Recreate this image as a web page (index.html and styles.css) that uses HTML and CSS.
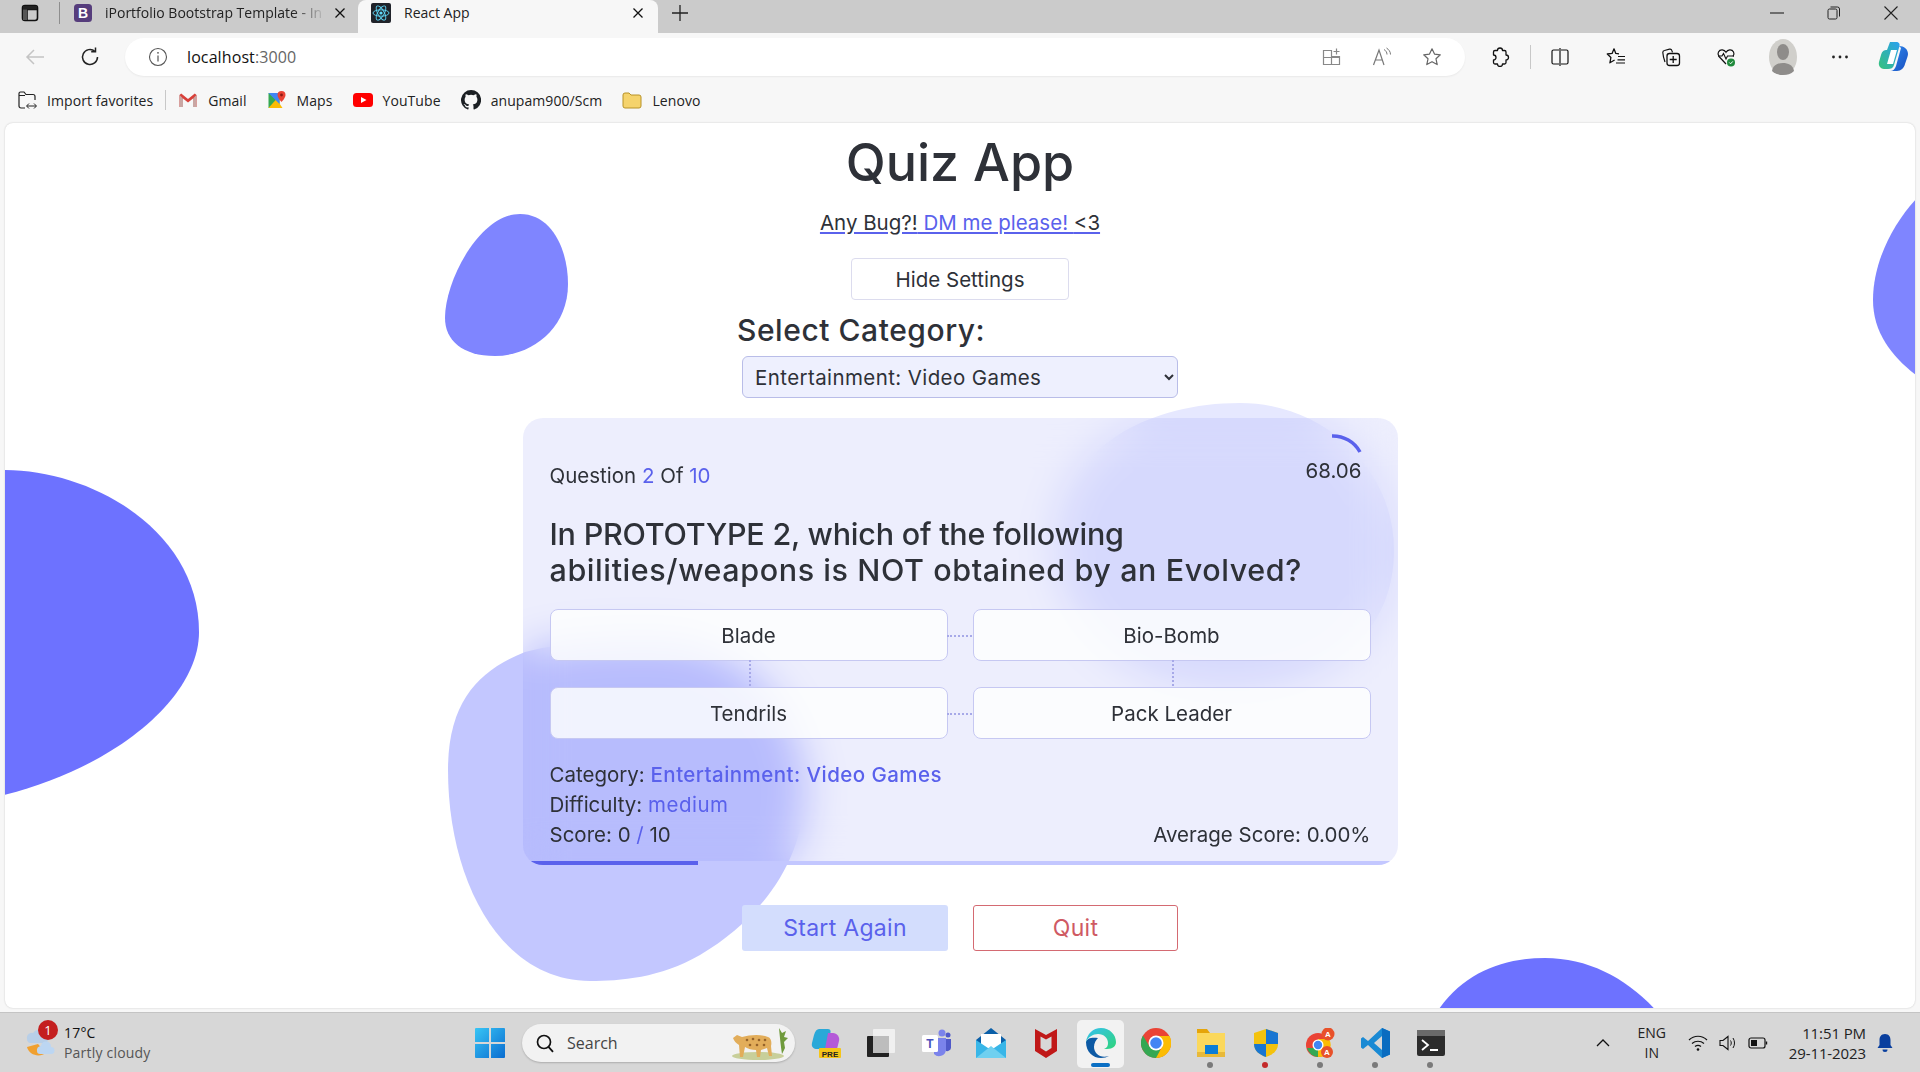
FILE: index.html
```html
<!DOCTYPE html>
<html lang="en">
<head>
<meta charset="utf-8">
<title>React App</title>
<link rel="stylesheet" href="styles.css">
</head>
<body>
<header class="tabstrip">
  <svg class="ic sidebar-ic" viewBox="0 0 20 20"><rect x="2.5" y="2.5" width="15" height="15" rx="2.5" fill="none" stroke="#111" stroke-width="1.6"/><path d="M2.5 6.5h15M7 6.5v11" stroke="#111" stroke-width="1.6"/><rect x="3" y="3" width="14" height="3.5" fill="#222"/><rect x="3" y="6.5" width="4" height="10.5" fill="#555"/></svg>
  <span class="tab-sep"></span>
  <div class="tab tab-idle">
    <svg class="ic fav" viewBox="0 0 20 20"><rect x="1" y="1" width="18" height="18" rx="3.5" fill="#563d7c"/><text x="10" y="15" text-anchor="middle" class="fav-b">B</text></svg>
    <span class="tab-title fade">iPortfolio Bootstrap Template - In</span>
    <svg class="ic tab-x" viewBox="0 0 12 12"><path d="M1.5 1.5l9 9M10.500 1.500l-9 9" stroke="#111" stroke-width="1.3"/></svg>
  </div>
  <div class="tab tab-active">
    <svg class="ic fav" viewBox="0 0 20 20"><rect width="20" height="20" rx="2" fill="#20232a"/><g fill="none" stroke="#61dafb" stroke-width=".9"><ellipse cx="10" cy="10" rx="8" ry="3.2"/><ellipse cx="10" cy="10" rx="8" ry="3.2" transform="rotate(60 10 10)"/><ellipse cx="10" cy="10" rx="8" ry="3.2" transform="rotate(120 10 10)"/></g><circle cx="10" cy="10" r="1.600" fill="#61dafb"/></svg>
    <span class="tab-title">React App</span>
    <svg class="ic tab-x" viewBox="0 0 12 12"><path d="M1.5 1.5l9 9M10.500 1.500l-9 9" stroke="#111" stroke-width="1.3"/></svg>
  </div>
  <svg class="ic new-tab" viewBox="0 0 18 18"><path d="M9 1v16M1 9h16" stroke="#222" stroke-width="1.3"/></svg>
  <div class="win-controls">
    <svg class="ic win" viewBox="0 0 14 14"><path d="M0 7h14" stroke="#222" stroke-width="1.100"/></svg>
    <svg class="ic win" viewBox="0 0 14 14"><rect x="1" y="3" width="9" height="10" rx="1.500" fill="none" stroke="#222"/><path d="M3.500 1h7a2 2 0 0 1 2 2v7.500" fill="none" stroke="#222"/></svg>
    <svg class="ic win" viewBox="0 0 14 14"><path d="M.5.500l13 13M13.500.500l-13 13" stroke="#222" stroke-width="1.100"/></svg>
  </div>
</header>

<nav class="toolbar">
  <svg class="ic tool back" viewBox="0 0 22 22"><path d="M20 11H3M10 4l-7 7 7 7" fill="none" stroke="#c4c4c4" stroke-width="1.500"/></svg>
  <svg class="ic tool reload" viewBox="0 0 22 22"><path d="M18.500 11a7.500 7.500 0 1 1-2.600-5.700" fill="none" stroke="#222" stroke-width="1.500"/><path d="M16.500 1.500v4.300h-4.300" fill="none" stroke="#222" stroke-width="1.500"/></svg>
  <div class="omnibox">
    <svg class="ic info-ic" viewBox="0 0 20 20"><circle cx="10" cy="10" r="8.500" fill="none" stroke="#555" stroke-width="1.100"/><path d="M10 8.500v6" stroke="#555" stroke-width="1.200"/><circle cx="10" cy="5.800" r=".9" fill="#555"/></svg>
    <span class="url">localhost<span class="url-port">:3000</span></span>
    <div class="omni-actions">
      <svg class="ic tool-s" viewBox="0 0 20 20"><path d="M1.500 3.500h8v14h-8zM9.500 9.500h8v8h-8zM1.500 10.500h16" fill="none" stroke="#888" stroke-width="1.200"/><path d="M14.500 1.500v6M11.500 4.500h6" stroke="#888" stroke-width="1.200"/></svg>
      <svg class="ic tool-s" viewBox="0 0 20 20"><path d="M1.500 18L7 3l5 15M3.300 13h7.400" fill="none" stroke="#777" stroke-width="1.200"/><path d="M12 2.500c2 1.200 3 3 3 5M14.500 1c2.200 1.500 4 3.500 4 6.500" fill="none" stroke="#777"/></svg>
      <svg class="ic tool-s" viewBox="0 0 20 20"><path d="M10 1.800l2.500 5.300 5.800.7-4.300 4 1.200 5.800-5.200-2.900-5.200 2.900 1.200-5.800-4.300-4 5.800-.7z" fill="none" stroke="#666" stroke-width="1.200" stroke-linejoin="round"/></svg>
    </div>
  </div>
  <div class="tool-group">
    <svg class="ic tool-s" viewBox="0 0 20 20"><path d="M7.500 3.500a2.500 2.500 0 0 1 5 0h2a1.500 1.500 0 0 1 1.500 1.500v3a2.500 2.500 0 0 1 0 5v2.500a1.500 1.500 0 0 1-1.500 1.500h-2a2.500 2.500 0 0 1-5 0H5a1.500 1.500 0 0 1-1.500-1.500V13a2.500 2.500 0 0 0 0-5V5A1.500 1.500 0 0 1 5 3.500z" fill="none" stroke="#111" stroke-width="1.300" stroke-linejoin="round"/></svg>
    <span class="tool-sep"></span>
    <svg class="ic tool-s split" viewBox="0 0 20 20"><path d="M9 3H3.500A1.500 1.500 0 0 0 2 4.500v11A1.500 1.500 0 0 0 3.500 17H9M11 3h5.500A1.500 1.500 0 0 1 18 4.500v11a1.500 1.500 0 0 1-1.500 1.500H11M10 1v18" fill="none" stroke="#111" stroke-width="1.200"/></svg>
    <svg class="ic tool-s" viewBox="0 0 20 20"><path d="M13 6.800l-3.200-.4L8 1.800 6.100 6.400 1.300 7l3.600 3.500-1 5.300 4.700-2.800" fill="none" stroke="#111" stroke-width="1.300" stroke-linejoin="round"/><path d="M12 9.500h7M11.500 12.800h7.500M10 16h9" stroke="#111" stroke-width="1.200"/></svg>
    <svg class="ic tool-s" viewBox="0 0 20 20"><path d="M4 15C2.500 11 2 8 1.800 5.500c0-1 .7-1.800 1.700-2l5-1.300c1-.2 2 .2 2.300 1.200l.7 2" fill="none" stroke="#111" stroke-width="1.200"/><rect x="6" y="6.500" width="12.500" height="12" rx="2.500" fill="none" stroke="#111" stroke-width="1.300"/><path d="M12.200 9v7M8.700 12.500h7" stroke="#111" stroke-width="1.300"/></svg>
    <svg class="ic tool-s" viewBox="0 0 20 20"><path d="M10 17L3 9.500C.5 6.500 3 2.500 6.300 2.800 8 3 9.200 4 10 5.300 10.800 4 12 3 13.700 2.800 17 2.500 19.500 6.500 17 9.500" fill="none" stroke="#111" stroke-width="1.200"/><path d="M2 9h4l1.500-2.500L10 12l1.500-3H18" fill="none" stroke="#111" stroke-width="1.100"/><circle cx="15" cy="15.500" r="4" fill="#1f8a3b"/><path d="M13.300 15.500l1.300 1.300 2.200-2.400" fill="none" stroke="#fff"/></svg>
    <svg class="ic avatar" viewBox="0 0 28 36"><ellipse cx="14" cy="18" rx="14" ry="18" fill="#d0cfcb"/><ellipse cx="14" cy="13" rx="6" ry="8" fill="#8e8c8a"/><path d="M3 32c1-6 6-8 11-8s10 2 11 8c-3 3-7 4-11 4s-8-1-11-4z" fill="#8e8c8a"/></svg>
    <svg class="ic tool-s dots" viewBox="0 0 20 20"><circle cx="3.500" cy="10" r="1.400" fill="#222"/><circle cx="10" cy="10" r="1.400" fill="#222"/><circle cx="16.500" cy="10" r="1.400" fill="#222"/></svg>
    <svg class="ic copilot" viewBox="0 0 30 32"><defs><linearGradient id="cpa" x1="0" y1="1" x2="1" y2="0"><stop offset="0" stop-color="#35c27b"/><stop offset="1" stop-color="#2aa0f0"/></linearGradient><linearGradient id="cpb" x1="0" y1="0" x2="1" y2="1"><stop offset="0" stop-color="#2f8cf0"/><stop offset="1" stop-color="#1a4fc0"/></linearGradient></defs><path d="M12 1h6c3 0 4 2 3.500 4L16 24c-1 3-3 4-6 4H6c-3 0-6-3-5-7l2-7c1-4 3-5 6-5l3-8z" fill="url(#cpa)"/><path d="M21 5c5 0 9 3 9 8 0 1-.3 2-.6 3l-2.400 7c-1 4-4 7-8 7h-7c3 0 5-2 6-5l5-18z" fill="url(#cpb)"/><path d="M13 9h6l-4 14H9z" fill="#fff"/></svg>
  </div>
</nav>

<nav class="bookmarks">
  <a class="bm bm-import"><svg class="ic bm-ic" viewBox="0 0 20 20"><path d="M8 18H4a2 2 0 0 1-2-2V3.500A1.500 1.500 0 0 1 3.500 2H7l2 2.500h7a2 2 0 0 1 2 2V10M2 5.500h6" fill="none" stroke="#222" stroke-width="1.200"/><path d="M10 16h9M12 13.500L9.500 16l2.500 2.500M17 13.500l2.500 2.500-2.500 2.500" fill="none" stroke="#222"/></svg>Import favorites</a>
  <span class="bm-sep"></span>
  <a class="bm"><svg class="ic bm-ic" viewBox="0 0 20 20"><path d="M1.500 5v12h3.500V8.500L10 12.500l5-4V17h3.500V5l-1.700-1.500L10 9 3.200 3.500z" fill="#d8403a"/><path d="M5 8.500V17H1.500V5z" fill="#c9a6a3"/><path d="M15 8.500V17h3.500V5z" fill="#c9a6a3"/></svg>Gmail</a>
  <a class="bm"><svg class="ic bm-ic" viewBox="0 0 20 20"><path d="M1.500 3h11v15h-11z" fill="#34a853"/><path d="M1.500 18l8-9 6 9z" fill="#fbbc04"/><path d="M1.500 3l11 11V3z" fill="#4285f4"/><path d="M14.500 1a4 4 0 0 0-4 4c0 3 4 7 4 7s4-4 4-7a4 4 0 0 0-4-4z" fill="#ea4335"/><circle cx="14.500" cy="5" r="1.400" fill="#8b1a14"/></svg>Maps</a>
  <a class="bm"><svg class="ic bm-ic" viewBox="0 0 20 20"><rect y="3" width="20" height="14" rx="3.500" fill="#f00"/><path d="M8 7l5.500 3L8 13z" fill="#fff"/></svg>YouTube</a>
  <a class="bm"><svg class="ic bm-ic" viewBox="0 0 16 16"><path fill="#1b1f23" d="M8 0a8 8 0 0 0-2.530 15.590c.4.070.55-.17.550-.38v-1.340c-2.230.48-2.700-1.070-2.700-1.070-.36-.92-.89-1.170-.89-1.170-.73-.5.050-.49.050-.49.800.060 1.230.83 1.230.83.710 1.220 1.870.87 2.330.66.070-.52.280-.87.510-1.070-1.780-.2-3.640-.89-3.640-3.950 0-.87.310-1.590.82-2.150-.080-.2-.36-1.020.080-2.120 0 0 .67-.21 2.200.82a7.600 7.600 0 0 1 4 0c1.530-1.040 2.200-.82 2.200-.82.440 1.100.16 1.920.080 2.120.51.560.82 1.270.82 2.150 0 3.070-1.870 3.750-3.650 3.950.29.250.54.730.54 1.480v2.190c0 .21.150.46.550.38A8 8 0 0 0 8 0z"/></svg>anupam900/Scm</a>
  <a class="bm"><svg class="ic bm-ic" viewBox="0 0 20 20"><path d="M1 5a2 2 0 0 1 2-2h4l2 2h8a2 2 0 0 1 2 2v9a2 2 0 0 1-2 2H3a2 2 0 0 1-2-2z" fill="#f5d36c" stroke="#b89227"/></svg>Lenovo</a>
</nav>

<div class="viewport">
  <main class="page">
    <svg class="blobs" viewBox="5 123 1910 885" aria-hidden="true">
      <path fill="#7f85ff" d="M520 214C552 214 568 250 568 284C568 330 530 356 495 356C462 356 445 340 445 318C445 280 480 214 520 214Z"/>
      <path fill="#6d72ff" d="M0 470C90 468 199 530 199 632C199 700 110 770 0 796Z"/>
      <path fill="#7f85ff" d="M1920 195C1895 220 1873 260 1873 300C1873 335 1895 360 1920 378Z"/>
      <path fill="#6d72ff" d="M1435 1015C1460 975 1500 958 1545 958C1590 958 1630 980 1660 1015Z"/>
      <path fill="#c3c7ff" d="M660 640C740 640 805 710 805 790C805 860 760 920 700 955C660 978 620 981 590 981C500 981 448 880 448 770C448 700 480 670 525 652C570 640 620 640 660 640Z"/>
      <path fill="#e6e8ff" d="M1240 403C1325 403 1394 470 1394 550C1394 640 1320 690 1230 690C1135 690 1056 630 1056 540C1056 460 1135 403 1240 403Z"/>
    </svg>
    <h1 class="title">Quiz App</h1>
    <a class="bug-link"><span class="ink">Any Bug?!</span> DM me please! <span class="ink">&lt;3</span></a>
    <button class="settings-btn">Hide Settings</button>
    <section class="settings">
      <label class="cat-label" for="cat">Select Category:</label>
      <select class="cat-select" id="cat"><option>Entertainment: Video Games</option></select>
    </section>
    <section class="card">
      <div class="card-body">
        <div class="card-head">
          <p class="q-count">Question <b class="hl">2</b> Of <b class="hl">10</b></p>
          <div class="timer">
            <svg class="timer-arc" viewBox="0 0 36 20"><path d="M5 2A31 31 0 0 1 33 18" fill="none" stroke="#5a61ec" stroke-width="3.500"/></svg>
            <span>68.06</span>
          </div>
        </div>
        <h2 class="question"><span class="q-line-a">In PROTOTYPE 2, which of the following</span><span class="q-line-b">abilities/weapons is NOT obtained by an Evolved?</span></h2>
        <div class="options">
          <button class="option link-h link-v">Blade</button>
          <button class="option link-v">Bio-Bomb</button>
          <button class="option link-h">Tendrils</button>
          <button class="option">Pack Leader</button>
        </div>
        <div class="quiz-info">
          <p>Category: <b class="hl strong">Entertainment: Video Games</b></p>
          <p>Difficulty: <b class="hl wide">medium</b></p>
          <div class="score-row"><p>Score: 0 <b class="hl">/</b> 10</p><p>Average Score: 0.00%</p></div>
        </div>
      </div>
      <div class="progress"><div class="progress-fill"></div></div>
    </section>
    <div class="actions">
      <button class="btn btn-start">Start Again</button>
      <button class="btn btn-quit">Quit</button>
    </div>
  </main>
</div>

<footer class="taskbar">
  <div class="weather">
    <svg class="ic weather-ic" viewBox="0 0 36 36"><path d="M4 14a5 5 0 0 1 6-6 6 6 0 0 1 11 2 4 4 0 0 1 0 8H7a4 4 0 0 1-3-4z" fill="#b8cfe8"/><path d="M4 22c2 8 12 11 19 6l-8-9z" fill="#f0a030"/><path d="M14 26a4 4 0 0 1 4-5 5 5 0 0 1 10 1 3.500 3.500 0 0 1 0 7H17a3 3 0 0 1-3-3z" fill="#bcd6f2"/></svg>
    <span class="badge">1</span>
    <div class="weather-text"><span class="temp">17°C</span><span>Partly cloudy</span></div>
  </div>
  <svg class="ic winlogo" viewBox="0 0 30 30"><defs><linearGradient id="wl" x1="0" y1="0" x2="1" y2="1"><stop offset="0" stop-color="#38c5f5"/><stop offset="1" stop-color="#0a6cd0"/></linearGradient></defs><path d="M0 1a1 1 0 0 1 1-1h13v14H0zM16 0h13a1 1 0 0 1 1 1v13H16zM0 16h14v14H1a1 1 0 0 1-1-1zM16 16h14v13a1 1 0 0 1-1 1H16z" fill="url(#wl)"/></svg>
  <div class="search">
    <svg class="ic search-ic" viewBox="0 0 20 20"><circle cx="9" cy="9" r="6.500" fill="none" stroke="#111" stroke-width="1.700"/><path d="M13.500 13.800l4.500 5" stroke="#111" stroke-width="1.800"/></svg>
    <span>Search</span>
    <svg class="ic cheetah" viewBox="0 0 62 36"><ellipse cx="30" cy="31" rx="26" ry="4" fill="#c8cf9a"/><path d="M51 3l3 5 4-2-2 6 4 1-4 4 1 6-3 6c-1-6-2-15-3-26z" fill="#6f9a3c"/><path d="M5 13l4-3 5 2c8-2 18-3 26 0 3 1 4 5 3 9l1 10h-3l-2-8-6 2-1 7h-3l-1-7c-4 0-8-1-11-3l-2 10h-3l-1-12c-3-2-5-4-6-7z" fill="#e2ad5a"/><g fill="#96632a"><circle cx="19" cy="15" r="1.300"/><circle cx="25" cy="14" r="1.300"/><circle cx="31" cy="15" r="1.300"/><circle cx="37" cy="15" r="1.300"/><circle cx="22" cy="20" r="1.300"/><circle cx="29" cy="20" r="1.300"/><circle cx="36" cy="20" r="1.300"/></g></svg>
  </div>
  <div class="apps">
    <div class="app"><svg class="ic app-ic" viewBox="0 0 30 30"><path d="M8 1h9c3 0 3 3 2 5l-4 15H6c-3 0-6-2-5-6l2-8c1-4 3-6 5-6z" fill="#2aa8d8"/><path d="M17 5h5c4 0 7 4 6 8l-2 8H14z" fill="#b45ad8"/><rect x="8" y="20" width="22" height="10" rx="1" fill="#f5c518"/><text x="19" y="28.500" text-anchor="middle" class="pre">PRE</text></svg></div>
    <div class="app"><svg class="ic app-ic" viewBox="0 0 30 30"><rect x="7" y="1" width="22" height="24" rx="1" fill="#f0f0f0"/><rect x="1" y="8" width="22" height="21" rx="1" fill="#222"/><rect x="7" y="8" width="16" height="17" fill="#bdbdbd"/></svg></div>
    <div class="app"><svg class="ic app-ic" viewBox="0 0 30 30"><circle cx="21" cy="5" r="3.500" fill="#7b83eb"/><circle cx="27" cy="7" r="2.500" fill="#5059c9"/><path d="M13 10h12v12a7 7 0 0 1-12 4z" fill="#7b83eb"/><path d="M25 11h5v9a4 4 0 0 1-5 3z" fill="#5059c9"/><rect x="1" y="7" width="16" height="17" rx="1.500" fill="#fff"/><text x="9" y="20" text-anchor="middle" class="teams-t">T</text></svg></div>
    <div class="app"><svg class="ic app-ic" viewBox="0 0 30 30"><path d="M15 0L30 12v18H0V12z" fill="#0a5fa8"/><rect x="5" y="6" width="20" height="14" fill="#fff"/><path d="M0 12l15 10 15-10v18H0z" fill="#38b6e8"/><path d="M0 30l15-12 15 12z" fill="#6fd0f0"/></svg></div>
    <div class="app"><svg class="ic app-ic" viewBox="0 0 30 30"><path d="M4 1l11 6 11-6v22l-11 7-11-7z" fill="#c01818"/><path d="M9.500 8.500l5.500 3 5.500-3v11.500l-5.500 3.500-5.500-3.500z" fill="#d8d8d8"/></svg></div>
    <div class="app app-on"><svg class="ic app-ic" viewBox="0 0 30 30"><defs><linearGradient id="ed" x1="0" y1="0" x2="1" y2="1"><stop offset="0" stop-color="#35c1f1"/><stop offset="1" stop-color="#2fd47a"/></linearGradient></defs><path d="M0 14c0 10 7 16 15 16 3 0 6-1 8-2-9 3-15-3-15-9 0-4 2-7 4-9-6-1-11 0-12 4z" fill="#0c59a4"/><path d="M15 0c9 0 15 7 15 14 0 4-3 7-9 7h-3c3-1 4-3 4-6 0-5-4-9-10-9-5 0-10 3-12 8 1-8 7-14 15-14z" fill="url(#ed)"/></svg><span class="app-bar"></span></div>
    <div class="app"><svg class="ic app-ic" viewBox="0 0 30 30"><circle cx="15" cy="15" r="15" fill="#ea4335"/><path d="M15 15L2 22.500A15 15 0 0 0 15 30l7.500-2z" fill="#34a853"/><path d="M15 8h13.500A15 15 0 0 1 15 30l7-13z" fill="#fbbc04"/><path d="M2 7.500l7 12L2 22.500A15 15 0 0 1 2 7.500z" fill="#34a853"/><circle cx="15" cy="15" r="7.500" fill="#fff"/><circle cx="15" cy="15" r="5.800" fill="#4285f4"/></svg></div>
    <div class="app"><svg class="ic app-ic" viewBox="0 0 30 30"><path d="M1 1h10l3 4h15v24H1z" fill="#e5a50a"/><rect x="1" y="5" width="28" height="24" fill="#fbd85c"/><rect x="1" y="24" width="28" height="5" fill="#e8b93a"/><rect x="9" y="17" width="13" height="9" fill="#0a7dd8"/></svg><span class="app-dot"></span></div>
    <div class="app"><svg class="ic app-ic" viewBox="0 0 30 30"><path d="M15 1l12 4v11c0 7-6 11-12 13C9 27 3 23 3 16V5z" fill="#f4c20d"/><path d="M15 1l12 4v11H15zM3 16h12v13C9 27 3 23 3 16z" fill="#1976d2"/></svg><span class="app-dot red"></span></div>
    <div class="app"><svg class="ic app-ic" viewBox="0 0 30 30"><circle cx="12" cy="17" r="12" fill="#ea4335"/><path d="M1 20a12 12 0 0 0 11 9l5-9z" fill="#34a853"/><path d="M12 11h11a12 12 0 0 1-11 18z" fill="#fbbc04"/><circle cx="12" cy="17" r="5.500" fill="#fff"/><circle cx="12" cy="17" r="4.200" fill="#4285f4"/><circle cx="22" cy="6" r="6.500" fill="#e8512a"/><circle cx="21" cy="24" r="6" fill="#e8512a"/><text x="22" y="8.500" text-anchor="middle" class="a-t">A</text><text x="21" y="26.500" text-anchor="middle" class="a-t">A</text></svg><span class="app-dot"></span></div>
    <div class="app"><svg class="ic app-ic" viewBox="0 0 30 30"><path d="M21 0l8 3.500v23L21 30 7 17l-5 4-2-1.500v-9L2 9l5 4z" fill="#1a8ad4"/><path d="M21 8l-8 7 8 7z" fill="#d8d8d8"/><path d="M21 0l8 3.500v23L21 30z" fill="#0a6cc0"/></svg><span class="app-dot"></span></div>
    <div class="app"><svg class="ic app-ic" viewBox="0 0 30 30"><rect x="1" y="2" width="28" height="26" rx="2" fill="#2c2c2c"/><rect x="1" y="2" width="28" height="6" fill="#6a6a6a"/><path d="M6 12l6 5-6 5" fill="none" stroke="#fff" stroke-width="1.800"/><path d="M14 22h8" stroke="#fff" stroke-width="2"/></svg><span class="app-dot"></span></div>
  </div>
  <div class="tray">
    <svg class="ic tray-chev" viewBox="0 0 14 10"><path d="M1 8l6-6 6 6" fill="none" stroke="#111" stroke-width="1.300"/></svg>
    <div class="lang"><span>ENG</span><span>IN</span></div>
    <svg class="ic tray-ic" viewBox="0 0 20 20"><path d="M1 7c5-5 13-5 18 0M4 10.500c3.500-3 8.500-3 12 0M7 13.500c2-1.500 4-1.500 6 0" fill="none" stroke="#111" stroke-width="1.200"/><circle cx="10" cy="16.500" r="1.300" fill="#111"/></svg>
    <svg class="ic tray-ic" viewBox="0 0 20 20"><path d="M2 7.500h3L10 3.500v13l-5-4H2z" fill="none" stroke="#111" stroke-width="1.100"/><path d="M12.500 7.500c1 1.500 1 3.500 0 5M15 5c2 3 2 7 0 10" fill="none" stroke="#111"/></svg>
    <svg class="ic tray-ic" viewBox="0 0 20 20"><rect x="1" y="5" width="16" height="10" rx="2" fill="none" stroke="#111" stroke-width="1.200"/><rect x="3" y="7" width="6" height="6" fill="#111"/><path d="M18.500 8.500v3" stroke="#111" stroke-width="1.400"/></svg>
    <div class="clock"><span>11:51 PM</span><span>29-11-2023</span></div>
    <svg class="ic bell" viewBox="0 0 20 20"><path d="M10 1c-4 0-5.500 3-5.500 6v5L2.500 15h15l-2-3V7c0-3-1.500-6-5.500-6z" fill="#0a3f9e"/><path d="M7.500 16.500a2.500 2.500 0 0 0 5 0z" fill="#0a3f9e"/></svg>
  </div>
</footer>
</body>
</html>
```
FILE: styles.css
```css
* { box-sizing: border-box; }
html, body { margin: 0; height: 1072px; overflow: hidden; }
body {
  display: flex;
  flex-direction: column;
  width: 1920px;
  background: #f7f7f7;
  font-family: "Open Sans", "Noto Sans", sans-serif;
  color: #222;
}
.ic { display: block; flex: none; }

/* Tab strip */
.tabstrip { height: 33px; background: #cbcbcb; display: flex; padding-left: 20px; flex: none; }
.sidebar-ic { width: 20px; height: 20px; margin-top: 3px; }
.tab-sep { width: 1px; height: 22px; background: #8e8e8e; margin: 2px 6px 0 19px; }
.tab { height: 33px; display: flex; align-items: center; position: relative; padding-bottom: 8px; }
.tab-idle { width: 292px; padding-left: 7px; padding-right: 12px; }
.tab-active { width: 300px; padding-left: 13px; padding-right: 14px; background: #f7f7f7; border-radius: 8px 8px 0 0; }
.fav { width: 20px; height: 20px; }
.fav-b { font: 700 14px "Liberation Sans", sans-serif; fill: #fff; }
.tab-title { flex: 1; margin-left: 13px; font-size: 14px; white-space: nowrap; overflow: hidden; color: #222; }
.tab-idle .tab-title { margin-left: 12px; }
.fade { -webkit-mask-image: linear-gradient(90deg, #000 85%, transparent); mask-image: linear-gradient(90deg, #000 85%, transparent); }
.tab-x { width: 12px; height: 12px; margin-left: 8px; }
.new-tab { width: 18px; height: 18px; margin: 4px 0 0 13px; }
.win-controls { margin-left: auto; display: flex; gap: 43px; padding: 6px 22px 0 0; }
.win { width: 14px; height: 14px; }

/* Toolbar */
.toolbar { height: 48px; display: flex; align-items: center; padding: 0 11px 0 24px; flex: none; }
.tool { width: 22px; height: 22px; }
.reload { margin-left: 33px; }
.omnibox { width: 1340px; height: 38px; margin-left: 24px; background: #fff; border-radius: 19px; display: flex; align-items: center; padding-left: 23px; box-shadow: 0 1px 2px rgba(0,0,0,.06); }
.info-ic { width: 20px; height: 20px; }
.url { margin-left: 19px; font-size: 16px; color: #111; letter-spacing: .1px; }
.url-port { color: #666; }
.omni-actions { margin-left: auto; display: flex; gap: 30px; padding-right: 23px; }
.tool-s { width: 20px; height: 20px; }
.tool-group { display: flex; align-items: center; margin-left: 25px; flex: 1; }
.tool-sep { width: 1px; height: 24px; background: #c8c8c8; margin: 0 19px 0 20px; }
.tool-group .tool-s + .tool-s { margin-left: 35px; }
.tool-group .split + .tool-s { margin-left: 36px; }
.avatar { width: 28px; height: 36px; margin-left: 33px; }
.tool-group .dots { margin-left: 33px; }
.copilot { width: 30px; height: 32px; margin-left: 28px; }

/* Bookmarks */
.bookmarks { height: 42px; display: flex; align-items: center; padding-left: 17px; padding-bottom: 4px; flex: none; font-size: 14px; color: #222; }
.bm { display: flex; align-items: center; margin-right: 20px; white-space: nowrap; letter-spacing: .08px; }
.bm-ic { width: 20px; height: 20px; margin-right: 10px; }
.bm-import { margin-right: 12px; }
.bm-sep { width: 1px; height: 20px; background: #c8c8c8; margin-right: 12px; }

/* Page */
.viewport { flex: 1; padding: 0 5px 4px; min-height: 0; }
.page { position: relative; height: 885px; background: #fff; border-radius: 8px; overflow: hidden; display: flex; flex-direction: column; align-items: center; box-shadow: 0 0 2px rgba(0,0,0,.2); font-family: Inter, "Open Sans", sans-serif; color: #2e3138; }
.blobs { position: absolute; inset: 0; width: 1910px; height: 885px; }
.title, .bug-link, .settings-btn, .settings, .card, .actions { position: relative; }
.title { margin: 4px 0 0; font-size: 52px; line-height: 72px; font-weight: 500; }
.bug-link { margin-top: 9px; font-size: 20.500px; line-height: 30px; color: #5a61ec; text-decoration: underline; text-underline-offset: 2px; }
.ink { color: #2e3138; }
.settings-btn { margin-top: 20px; width: 218px; height: 42px; background: #fff; border: 1px solid #dcdcee; border-radius: 4px; font: 400 20.500px Inter, sans-serif; color: #2e3138; }
.settings { width: 436px; margin-top: 10px; display: flex; flex-direction: column; }
.cat-label { margin-left: -5px; font-size: 30px; line-height: 40px; font-weight: 500; letter-spacing: .55px; white-space: nowrap; }
.cat-select { margin-top: 6px; height: 42px; width: 436px; padding: 0 8px; background: #eef0fe; border: 1px solid #b9bde8; border-radius: 6px; font: 400 20.500px Inter, sans-serif; letter-spacing: .4px; color: #2e3138; }
.card { margin-top: 20px; width: 875px; height: 447px; border-radius: 20px; background: rgba(90, 100, 240, .11); -webkit-backdrop-filter: blur(20px); backdrop-filter: blur(20px); overflow: hidden; display: flex; flex-direction: column; font-size: 20.500px; }
.card-body { flex: 1; padding: 17px 27px 0; }
.card-head { display: flex; justify-content: space-between; align-items: flex-end; height: 58px; }
.card-head p { margin: 0 0 2px; line-height: 30px; }
.hl { color: #5a61ec; font-weight: 400; }
.strong { font-weight: 500; letter-spacing: .45px; }
.wide { letter-spacing: .5px; }
.timer { display: flex; flex-direction: column; align-items: flex-end; margin-right: 9px; line-height: 24px; }
.timer-arc { width: 36px; height: 20px; margin-right: -1px; margin-bottom: 5px; }
.timer span { margin-bottom: 10px; }
.question { margin: 23px 0 21px; font-size: 30.500px; line-height: 36px; font-weight: 500; white-space: nowrap; }
.q-line-a, .q-line-b { display: block; }
.q-line-a { letter-spacing: -.22px; }
.q-line-b { letter-spacing: .58px; }
.options { display: grid; grid-template-columns: 398px 398px; column-gap: 25px; row-gap: 26px; }
.option { position: relative; height: 52px; background: rgba(255,255,255,.82); border: 1px solid #c6c8f2; border-radius: 8px; font: 400 20.500px Inter, sans-serif; color: #2e3138; }
.link-h::after { content: ""; position: absolute; left: 100%; top: 50%; width: 25px; border-top: 2px dotted #a7a9e8; }
.link-v::before { content: ""; position: absolute; left: 50%; top: 100%; height: 26px; border-left: 2px dotted #a7a9e8; }
.quiz-info { margin-top: 21px; line-height: 30px; }
.quiz-info p { margin: 0; }
.score-row { display: flex; justify-content: space-between; }
.progress { flex: none; height: 4px; background: #c3c7ff; }
.progress-fill { width: 20%; height: 100%; background: #5a61ec; }
.actions { margin-top: 40px; width: 436px; display: grid; grid-template-columns: 206px 205px; column-gap: 25px; }
.btn { height: 46px; border-radius: 3px; font: 400 23px Inter, sans-serif; letter-spacing: .3px; }
.btn-start { background: #d3ddfd; border: 0; color: #5a61ec; }
.btn-quit { background: #fff; border: 1px solid #d46a72; color: #cf5a63; }

/* Taskbar */
.taskbar { height: 60px; flex: none; background: #d7d7d7; border-top: 1px solid #c4c4c4; display: flex; align-items: center; position: relative; font-size: 14px; color: #222; }
.weather { position: relative; display: flex; align-items: center; width: 475px; padding-left: 23px; }
.weather-ic { width: 36px; height: 36px; }
.badge { position: absolute; left: 38px; top: -3px; width: 20px; height: 20px; border-radius: 50%; background: #c41f1f; color: #fff; font-size: 13px; line-height: 20px; text-align: center; }
.weather-text { margin-left: 5px; display: flex; flex-direction: column; font-size: 14px; line-height: 20px; color: #555; letter-spacing: .2px; }
.temp { color: #111; }
.winlogo { width: 30px; height: 30px; }
.search { margin-left: 17px; width: 273px; height: 38px; background: #f2f2f2; border-radius: 19px; display: flex; align-items: center; padding-left: 13px; font-size: 16px; color: #444; box-shadow: 0 1px 2px rgba(0,0,0,.2); }
.search-ic { width: 20px; height: 20px; margin-right: 12px; }
.cheetah { width: 64px; height: 36px; margin-left: auto; margin-right: 4px; }
.apps { margin-left: 3px; display: flex; height: 60px; }
.app { position: relative; width: 55px; height: 60px; display: flex; align-items: center; justify-content: center; }
.app-ic { width: 30px; height: 30px; }
.app-on::before { content: ""; position: absolute; inset: 7px 4px 5px; background: #f2f2f2; border-radius: 5px; }
.app-on .app-ic { position: relative; }
.app-bar { position: absolute; left: 18px; bottom: 6px; width: 19px; height: 4px; border-radius: 2px; background: #0a6fc4; }
.app-dot { position: absolute; left: 24px; bottom: 5px; width: 6px; height: 6px; border-radius: 50%; background: #7a7a7a; }
.app-dot.red { background: #c42a2a; }
.pre { font: 700 8px "Liberation Sans", sans-serif; fill: #222; }
.teams-t { font: 700 12px "Liberation Sans", sans-serif; fill: #4b53bc; }
.a-t { font: 700 8px "Liberation Sans", sans-serif; fill: #fff; }
.tray { position: absolute; right: 0; top: 0; height: 60px; display: flex; align-items: center; padding-right: 25px; }
.tray-chev { width: 14px; height: 10px; margin-right: 22px; }
.lang { display: flex; flex-direction: column; align-items: center; font-size: 14px; line-height: 20px; width: 40px; margin-right: 16px; }
.tray-ic { width: 20px; height: 20px; margin-right: 10px; }
.clock { margin-left: 11px; margin-right: 9px; display: flex; flex-direction: column; align-items: flex-end; font-size: 15px; line-height: 20px; letter-spacing: -.1px; }
.bell { width: 20px; height: 20px; }
```
